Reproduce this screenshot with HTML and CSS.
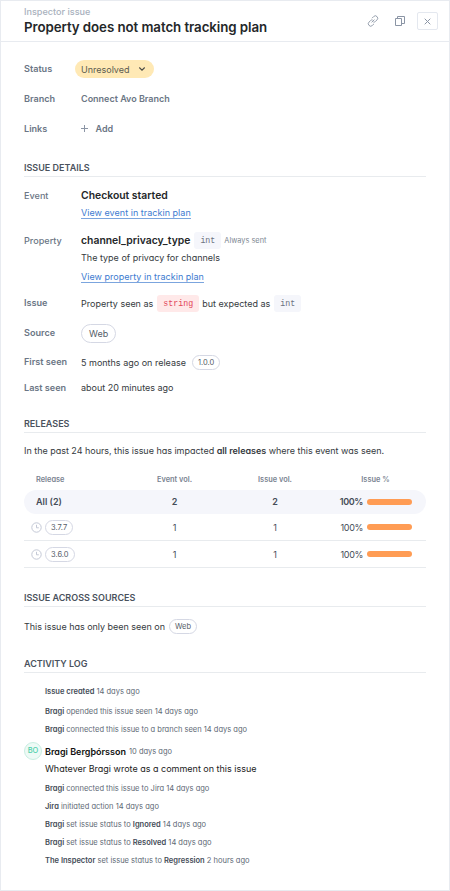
FILE: index.html
```html
<!DOCTYPE html>
<html lang="en">
<head>
<meta charset="utf-8">
<title>Inspector issue</title>
<link rel="stylesheet" href="styles.css">
</head>
<body>
<main class="panel">
  <header class="header">
    <div class="heading">
      <div class="eyebrow">Inspector issue</div>
      <h1>Property does not match tracking plan</h1>
    </div>
    <div class="actions">
      <svg class="icon link" width="12" height="12" viewBox="0 0 12 12"><path d="M5 3.200 6.600 1.600a2.300 2.300 0 0 1 3.400 0 2.300 2.300 0 0 1 0 3.300L8.400 6.500a2.300 2.300 0 0 1-2 .6M7 8.800l-1.600 1.600a2.300 2.300 0 0 1-3.400 0 2.300 2.300 0 0 1 0-3.300L3.600 5.500a2.300 2.300 0 0 1 2-.6M4.600 7.400l2.800-2.800"/></svg>
      <svg class="icon copy" width="12" height="12" viewBox="0 0 12 12"><path d="M1.500 3.500h6v7h-6zM3.500 3.500v-2h7v7h-3"/></svg>
      <button class="close" aria-label="Close"><svg class="icon" width="7" height="7" viewBox="0 0 7 7"><path d="M.7.7l5.600 5.600M6.300.7.700 6.300"/></svg></button>
    </div>
  </header>
  <div class="content">
    <div class="row"><span class="label">Status</span><span class="status">Unresolved<svg class="chevron" width="8" height="6" viewBox="0 0 8 6"><path d="M1.300 1.500 4 4.200l2.700-2.700"/></svg></span></div>
    <div class="row"><span class="label">Branch</span><span class="muted branch">Connect Avo Branch</span></div>
    <div class="row"><span class="label">Links</span><span class="muted add"><svg class="plus" width="7" height="7" viewBox="0 0 7 7"><path d="M3.500 0v7M0 3.500h7"/></svg>Add</span></div>

    <h2 class="first-title">Issue details</h2>
    <div class="row event"><span class="label">Event</span><b class="name">Checkout started</b></div>
    <div class="row sub"><a class="event-link">View event in trackin plan</a></div>
    <div class="row property"><span class="label">Property</span><b class="name channel">channel_privacy_type</b><code>int</code><span class="always">Always sent</span></div>
    <div class="row sub desc alt"><span>The type of privacy for channels</span></div>
    <div class="row sub second-link"><a class="property-link">View property in trackin plan</a></div>
    <div class="row issue"><span class="label">Issue</span><span class="seen-as">Property seen as</span><code class="bad">string</code><span class="expected">but expected as</span><code>int</code></div>
    <div class="row"><span class="label">Source</span><span class="chip large">Web</span></div>
    <div class="row first-seen"><span class="label">First seen</span><span class="ago">5 months ago on release</span><span class="chip">1.0.0</span></div>
    <div class="row last-seen"><span class="label">Last seen</span><span class="minutes">about 20 minutes ago</span></div>

    <h2>Releases</h2>
    <p class="summary alt">In the past 24 hours, this issue has impacted <b>all releases</b> where this event was seen.</p>
    <div class="table">
      <div class="tr th alt"><span class="release">Release</span><span class="num">Event vol.</span><span class="num">Issue vol.</span><span class="num">Issue %</span></div>
      <div class="tr total"><span class="release">All (2)</span><span class="num">2</span><span class="num">2</span><span class="pct">100%<i class="bar"></i></span></div>
      <div class="tr line"><span class="version"><svg class="clock" width="11" height="11" viewBox="0 0 11 11"><circle cx="5.500" cy="5.500" r="4.700"/><path d="M5.500 2.800v3h2.300"/></svg><span class="chip">3.7.7</span></span><span class="num">1</span><span class="num">1</span><span class="pct">100%<i class="bar"></i></span></div>
      <div class="tr line"><span class="version"><svg class="clock" width="11" height="11" viewBox="0 0 11 11"><circle cx="5.500" cy="5.500" r="4.700"/><path d="M5.500 2.800v3h2.300"/></svg><span class="chip">3.6.0</span></span><span class="num">1</span><span class="num">1</span><span class="pct">100%<i class="bar"></i></span></div>
    </div>

    <h2 class="sources-title">Issue across sources</h2>
    <p class="sources alt"><span>This issue has only been seen on</span><span class="chip web">Web</span></p>

    <h2 class="log-title">Activity log</h2>
    <div class="log alt">
      <div class="entry created"><b>Issue created</b> 14 days ago</div>
      <div class="entry"><b>Bragi</b> opended this issue seen 14 days ago</div>
      <div class="entry"><b>Bragi</b> connected this issue to a branch seen 14 days ago</div>
      <div class="comment"><span class="avatar">BO</span><b>Bragi Bergþórsson</b><span class="when">10 days ago</span></div>
      <div class="message">Whatever Bragi wrote as a comment on this issue</div>
      <div class="entry"><b>Bragi</b> connected this issue to Jira 14 days ago</div>
      <div class="entry"><b>Jira</b> initiated action 14 days ago</div>
      <div class="entry"><b>Bragi</b> set issue status to <b>Ignored</b> 14 days ago</div>
      <div class="entry"><b>Bragi</b> set issue status to <b>Resolved</b> 14 days ago</div>
      <div class="entry"><b>The Inspector</b> set issue status to <b>Regression</b> 2 hours ago</div>
    </div>
  </div>
</main>
</body>
</html>
```
FILE: styles.css
```css
* { box-sizing: border-box; }
body { margin: 0; background: #fff; font-family: Inter, "Liberation Sans", sans-serif; font-size: 9px; color: #353a40; }
h1, h2, p { margin: 0; }
svg { fill: none; flex: none; }
b { font-weight: 600; }
.alt { font-feature-settings: "cv11"; }
.panel { width: 450px; height: 891px; border: 1px solid #e8ebf0; overflow: hidden; }
.header { height: 41px; border-bottom: 1px solid #e8ebf0; padding: 4px 11px 0 23px; display: flex; justify-content: space-between; }
.eyebrow { color: #a9b1bd; font-weight: 500; font-size: 9.100px; line-height: 13px; }
h1 { font-size: 13.300px; line-height: 18px; font-weight: 600; letter-spacing: -.07px; color: #242729; white-space: nowrap; }
.actions { display: flex; align-items: center; height: 32px; gap: 15px; }
.icon { stroke: #8b95a5; stroke-width: 1; }
.link { stroke-width: .9; }
.close { width: 21px; height: 18px; padding: 0; margin-left: -4px; background: #fff; border: 1px solid #e4e8ef; border-radius: 2px; display: flex; align-items: center; justify-content: center; }
.content { padding: 12px 23px 0; }
.row { height: 30px; display: flex; align-items: center; white-space: nowrap; }
.label { width: 57px; flex: none; color: #6b7685; font-weight: 600; font-size: 9.100px; padding-bottom: 1px; }
.muted { color: #6b7685; font-weight: 600; padding-bottom: 1px; }
.status { display: flex; align-items: center; justify-content: space-between; width: 79px; height: 18px; margin-left: -6px; padding: 0 8px 0 6px; border-radius: 9px; background: #ffe9b5; color: #5b5b50; }
.chevron { stroke: #4b4b45; stroke-width: 1.100; }
.add { display: flex; align-items: center; gap: 7.500px; }
.plus { stroke: #8b95a5; }
h2 { height: 18px; line-height: 17px; margin-top: 15px; border-bottom: 1px solid #e8ebee; font-size: 9px; font-weight: 600; color: #4a525d; text-transform: uppercase; }
.event { height: 17px; margin-top: 10px; }
.name { font-size: 10.400px; color: #242729; }
.sub { height: 18px; padding-left: 57px; }
.sub a { color: #3d7bd0; line-height: 11px; border-bottom: 1px solid #7ba5de; letter-spacing: .03px; }
.event .label, .property .label { font-weight: 500; padding-bottom: 0; }
.property { height: 18px; margin-top: 9px; }
.desc { height: 17px; }
.second-link { margin-top: 2px; }
code { height: 17px; padding: 0 6px; margin-left: 4px; border-radius: 3px; background: #f5f6fb; color: #6b7280; font: 8.300px/18px "Liberation Mono", monospace; }
code.bad { background: #ffe9e9; color: #e34759; margin-right: 3px; }
.always { font-size: 7.400px; color: #7d8793; margin-left: 3px; }
.issue { margin-top: 2px; }
.chip { height: 15px; line-height: 13px; border: 1px solid #d5d8e4; border-radius: 8px; padding: 0 5px; font-size: 7.500px; color: #555d68; }
.large { height: 19px; line-height: 17px; font-size: 9px; border-radius: 10px; padding: 0 7px; }
.first-seen { height: 28px; }
.first-seen .chip { margin-left: 6px; }
.last-seen { height: 24px; }
.minutes { padding-bottom: 1px; }
.summary { height: 17px; line-height: 17px; margin-top: 9px; white-space: nowrap; letter-spacing: -.02px; }
.table { margin-top: 12px; }
.tr { display: grid; grid-template-columns: 100px 101px 100px 101px; align-items: center; height: 27px; color: #444c57; }
.th { height: 19px; padding-bottom: 2px; font-size: 7.400px; font-weight: 600; color: #7a8491; }
.release { padding-left: 12px; }
.num { text-align: center; }
.total { height: 24px; padding-bottom: 1px; border-radius: 12px; background: #f5f6fb; font-weight: 600; }
.line { border-bottom: 1px solid #e8ebee; }
.pct { display: flex; align-items: center; justify-content: flex-end; padding-right: 14px; gap: 4px; letter-spacing: -.35px; }
.bar { width: 45px; height: 6px; border-radius: 3px; background: #ff9c54; }
.version { display: flex; align-items: center; padding-left: 7px; gap: 3px; }
.clock { stroke: #c3c8d5; stroke-width: 1; }
.sources-title { margin-top: 21px; }
.sources { margin-top: 10px; height: 18px; display: flex; align-items: center; gap: 4px; letter-spacing: -.02px; }
.log-title { margin-top: 20px; }
.log { padding-top: 10px; color: #606975; }
.entry { padding-left: 21px; height: 18px; line-height: 18px; font-size: 7.530px; white-space: nowrap; }
.entry b { color: #444c57; }
.created { margin-bottom: 2px; }
.comment { display: flex; align-items: center; height: 26px; margin-top: -1px; }
.comment b { color: #111; }
.avatar { width: 18px; height: 18px; border: 1px solid #c9eee2; border-radius: 50%; background: #eefaf6; color: #4fd0aa; line-height: 16px; text-align: center; font-size: 7.500px; margin-right: 3px; font-weight: 500; }
.when { font-size: 7.500px; margin-left: 3px; }
.message { padding-left: 21px; margin-top: -3px; height: 19px; line-height: 16px; color: #222; }
```
